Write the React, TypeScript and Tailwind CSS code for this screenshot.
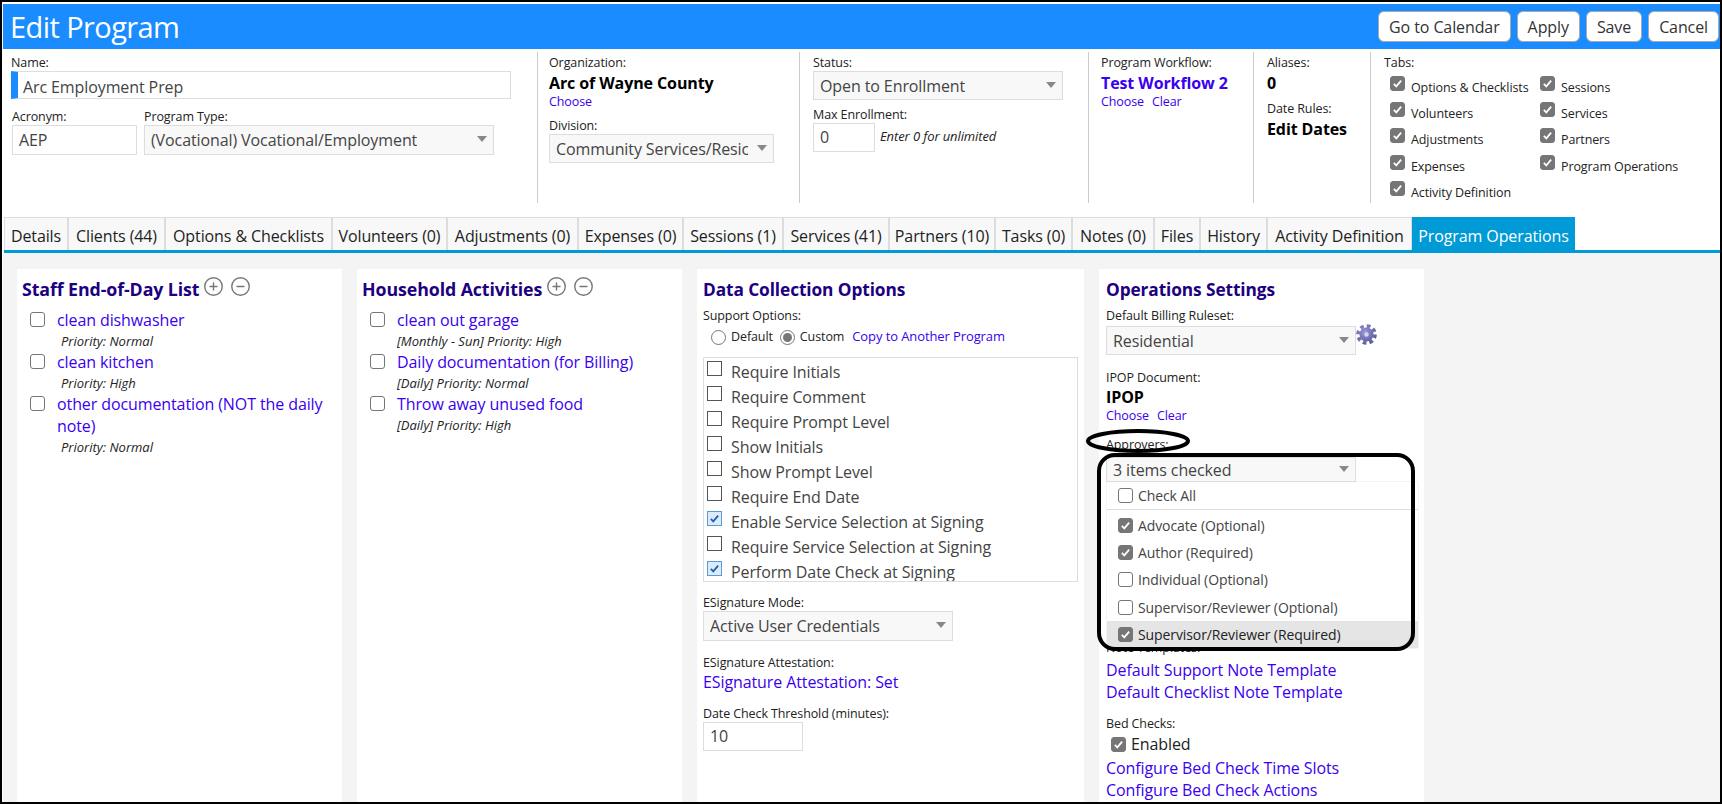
import { CircleMinus, CirclePlus } from "lucide-react"

const tabs = [
  { label: "Details", width: "w-[64px]" },
  { label: "Clients (44)", width: "w-[97px]" },
  { label: "Options & Checklists", width: "w-[167px]" },
  { label: "Volunteers (0)", width: "w-[115px]" },
  { label: "Adjustments (0)", width: "w-[131px]" },
  { label: "Expenses (0)", width: "w-[105px]" },
  { label: "Sessions (1)", width: "w-[100px]" },
  { label: "Services (41)", width: "w-[106px]" },
  { label: "Partners (10)", width: "w-[106px]" },
  { label: "Tasks (0)", width: "w-[77px]" },
  { label: "Notes (0)", width: "w-[82px]" },
  { label: "Files", width: "w-[46px]" },
  { label: "History", width: "w-[67px]" },
  { label: "Activity Definition", width: "w-[145px]" },
]

const tabChecks = [
  ["Options & Checklists", "Sessions"],
  ["Volunteers", "Services"],
  ["Adjustments", "Partners"],
  ["Expenses", "Program Operations"],
  ["Activity Definition", ""],
]

const supportOptions = [
  { label: "Require Initials", on: false },
  { label: "Require Comment", on: false },
  { label: "Require Prompt Level", on: false },
  { label: "Show Initials", on: false },
  { label: "Show Prompt Level", on: false },
  { label: "Require End Date", on: false },
  { label: "Enable Service Selection at Signing", on: true },
  { label: "Require Service Selection at Signing", on: false },
  { label: "Perform Date Check at Signing", on: true },
]

const approvers = [
  { label: "Advocate (Optional)", on: true },
  { label: "Author (Required)", on: true },
  { label: "Individual (Optional)", on: false },
  { label: "Supervisor/Reviewer (Optional)", on: false },
  { label: "Supervisor/Reviewer (Required)", on: true },
]

function Tick({ color = "#fff" }: { color?: string }) {
  return (
    <svg viewBox="0 0 16 16" className="h-full w-full">
      <path d="M3.5 8.5l3 3 6-7" fill="none" stroke={color} strokeWidth="2.2" />
    </svg>
  )
}

function GreyCheck({ on = true }: { on?: boolean }) {
  return (
    <span
      className={`block h-[15px] w-[15px] shrink-0 rounded-[3px] border ${
        on ? "border-[#767676] bg-[#767676]" : "border-[#767676] bg-white"
      }`}
    >
      {on && <Tick />}
    </span>
  )
}

function SquareCheck({ on }: { on: boolean }) {
  return (
    <span
      className={`block h-[15px] w-[15px] shrink-0 border ${
        on ? "border-[#5b9bd5] bg-[#dcebfa]" : "border-[#555] bg-white"
      }`}
    >
      {on && <Tick color="#1f5fb4" />}
    </span>
  )
}

function Arrow() {
  return (
    <svg width="10" height="6" viewBox="0 0 10 6" className="-mt-[2px] shrink-0">
      <polygon points="0,0 10,0 5,6" fill="#888" />
    </svg>
  )
}

function Gear() {
  return (
    <svg width="21" height="21" viewBox="0 0 21 21" className="-mt-[2px] shrink-0">
      <defs>
        <radialGradient id="gearFill" cx="40%" cy="35%" r="75%">
          <stop offset="0%" stopColor="#9c9cd8" />
          <stop offset="100%" stopColor="#5a5a9f" />
        </radialGradient>
      </defs>
      <circle cx="10.5" cy="10.5" r="8.4" fill="none" stroke="url(#gearFill)" strokeWidth="3.8" strokeDasharray="3.6 3" />
      <circle cx="10.5" cy="10.5" r="7" fill="url(#gearFill)" />
      <circle cx="10.5" cy="10.5" r="2.2" fill="#d4d4ec" />
    </svg>
  )
}

function Label({ children, className = "" }: { children: React.ReactNode; className?: string }) {
  return <div className={`h-4 text-[12.5px] leading-4 text-[#222] ${className}`}>{children}</div>
}

function Select({ value, className = "" }: { value: string; className?: string }) {
  return (
    <div
      className={`flex items-center justify-between border border-[#ddd] bg-[#f8f8f8] pl-[6px] pr-[6px] text-[16px] text-[#444] ${className}`}
    >
      <span className="mr-[9px] min-w-0 overflow-hidden whitespace-nowrap">{value}</span>
      <Arrow />
    </div>
  )
}

function LinkText({ children, className = "" }: { children: React.ReactNode; className?: string }) {
  return <a className={`text-[#3a00f0] ${className}`}>{children}</a>
}

function SmallLinks({ clear = true }: { clear?: boolean }) {
  return (
    <div className="flex h-4 gap-[8px] text-[12.5px] leading-4 text-[#3a00f0]">
      <a>Choose</a>
      {clear && <a>Clear</a>}
    </div>
  )
}

function Bold({ children, className = "" }: { children: React.ReactNode; className?: string }) {
  return <div className={`h-[22px] text-[16px] font-bold leading-[22px] text-black ${className}`}>{children}</div>
}

function Heading({ children, className = "text-[17.3px]" }: { children: React.ReactNode; className?: string }) {
  return <h2 className={`h-[22px] font-bold leading-[21px] text-[#200080] ${className}`}>{children}</h2>
}

function ListPanel({
  title,
  items,
  subIndent,
}: {
  title: string
  items: { text: string; sub: string }[]
  subIndent: string
}) {
  return (
    <section className="h-full w-[325px] shrink-0 bg-white pl-[5px] pr-[10px] pt-[10px]">
      <div className="flex items-start gap-[4px]">
        <Heading className="text-[17.8px]">{title}</Heading>
        <div className="-mt-[3px] flex gap-[6px] text-[#777]">
          <CirclePlus size={21} strokeWidth={1.6} />
          <CircleMinus size={21} strokeWidth={1.6} />
        </div>
      </div>
      <ul className="mt-2">
        {items.map((item) => (
          <li key={item.text} className="flex gap-[12px] pl-[8px]">
            <span className="pt-[3px]">
              <GreyCheck on={false} />
            </span>
            <div>
              <LinkText className="block text-[16px] leading-[22px]">{item.text}</LinkText>
              <div className={`h-5 text-[13px] italic leading-5 tracking-normal text-[#222] ${subIndent}`}>{item.sub}</div>
            </div>
          </li>
        ))}
      </ul>
    </section>
  )
}

export default function App() {
  return (
    <div className="relative h-[804px] w-[1722px] overflow-hidden border-2 border-black bg-white pl-px pt-[2px] font-['Open_Sans',sans-serif] tracking-[-0.1px]">
      <div className="flex h-full flex-col">
        <header className="flex h-[45px] shrink-0 items-center justify-between bg-[#1a8cff] pl-[7px] pr-px">
          <h1 className="text-[29px] font-normal tracking-[-0.02em] text-white">Edit Program</h1>
          <div className="flex gap-[6px]">
            {["Go to Calendar", "Apply", "Save", "Cancel"].map((b) => (
              <button
                key={b}
                className="h-[31px] rounded-[6px] border border-[#aaa] bg-white px-[10px] text-[16px] text-[#333]"
              >
                {b}
              </button>
            ))}
          </div>
        </header>

        {/* Program summary columns */}
        <div className="h-[168px] shrink-0 pt-[3px]">
          <div className="flex h-[151px]">
            <div className="w-[535px] shrink-0 border-r border-[#ccc] pl-2 pt-[3px]">
              <Label>Name:</Label>
              <div className="flex h-[28px] w-[500px] border border-[#ddd] border-l-[7px] border-l-[#1a8cff] pl-[5px] text-[16px] leading-[30px] text-[#444]">
                Arc Employment Prep
              </div>
              <div className="mt-[10px] flex gap-[7px] pl-px">
                <div className="w-[125px]">
                  <Label>Acronym:</Label>
                  <div className="h-[30px] border border-[#ddd] pl-[6px] text-[16px] leading-[28px] text-[#444]">
                    AEP
                  </div>
                </div>
                <div>
                  <Label>Program Type:</Label>
                  <Select value="(Vocational) Vocational/Employment" className="h-[30px] w-[350px]" />
                </div>
              </div>
            </div>

            <div className="w-[262px] shrink-0 border-r border-[#ccc] pl-[11px] pt-[3px]">
              <Label>Organization:</Label>
              <Bold className="mt-[1px]">Arc of Wayne County</Bold>
              <SmallLinks clear={false} />
              <Label className="mt-[8px]">Division:</Label>
              <Select value="Community Services/Resic" className="h-[29px] w-[225px]" />
            </div>

            <div className="w-[289px] shrink-0 border-r border-[#ccc] pl-[13px] pt-[3px]">
              <Label>Status:</Label>
              <Select value="Open to Enrollment" className="h-[29px] w-[250px]" />
              <Label className="mt-[7px]">Max Enrollment:</Label>
              <div className="flex items-start gap-[5px]">
                <div className="h-[29px] w-[62px] border border-[#ddd] pl-[6px] text-[16px] leading-[27px] text-[#444]">
                  0
                </div>
                <span className="pt-[5px] text-[13px] italic leading-4 text-[#222]">Enter 0 for unlimited</span>
              </div>
            </div>

            <div className="w-[165px] shrink-0 border-r border-[#ccc] pl-[12px] pt-[3px]">
              <Label>Program Workflow:</Label>
              <Bold className="mt-[1px] !text-[#3a00f0]">Test Workflow 2</Bold>
              <SmallLinks />
            </div>

            <div className="w-[117px] shrink-0 border-r border-[#ccc] pl-[13px] pt-[3px]">
              <Label>Aliases:</Label>
              <Bold className="mt-[1px]">0</Bold>
              <Label className="mt-[7px]">Date Rules:</Label>
              <Bold className="mt-[1px]">Edit Dates</Bold>
            </div>

            <div className="pl-[13px] pt-[3px]">
              <Label>Tabs:</Label>
              <div className="mt-[5px] pl-[6px]">
                {tabChecks.map((row) => (
                  <div key={row[0]} className="flex h-[26.2px]">
                    {row.map((name) => (
                      <div key={name} className="flex w-[150px] gap-[6px]">
                        {name && (
                          <>
                            <GreyCheck />
                            <span className="pt-[4px] text-[12.5px] leading-4 text-[#222]">{name}</span>
                          </>
                        )}
                      </div>
                    ))}
                  </div>
                ))}
              </div>
            </div>
          </div>
        </div>

        {/* Tab strip */}
        <nav className="flex h-[33px] shrink-0 pl-px">
          {tabs.map((t) => (
            <div
              key={t.label}
              className={`${t.width} shrink-0 overflow-hidden border border-b-0 border-[#ddd] bg-[#f8f8f8] text-center text-[16px] leading-[36px] whitespace-nowrap text-[#222]`}
            >
              {t.label}
            </div>
          ))}
          <div className="w-[163px] shrink-0 overflow-hidden bg-[#009ad6] text-center text-[16px] leading-[38px] whitespace-nowrap text-white">
            Program Operations
          </div>
        </nav>
        <div className="ml-px h-[3px] shrink-0 bg-[#009ad6]" />

        <main className="flex min-h-0 flex-1 gap-[15px] overflow-hidden bg-[#f4f4f4] pl-[14px] pt-[16px]">
          <ListPanel
            title="Staff End-of-Day List"
            subIndent="pl-[4px]"
            items={[
              { text: "clean dishwasher", sub: "Priority: Normal" },
              { text: "clean kitchen", sub: "Priority: High" },
              { text: "other documentation (NOT the daily note)", sub: "Priority: Normal" },
            ]}
          />
          <ListPanel
            title="Household Activities"
            subIndent=""
            items={[
              { text: "clean out garage", sub: "[Monthly - Sun] Priority: High" },
              { text: "Daily documentation (for Billing)", sub: "[Daily] Priority: Normal" },
              { text: "Throw away unused food", sub: "[Daily] Priority: High" },
            ]}
          />

          <section className="h-full w-[387px] shrink-0 bg-white px-[6px] pt-[10px]">
            <Heading>Data Collection Options</Heading>
            <Label className="mt-[7px]">Support Options:</Label>
            <div className="mt-[3px] flex h-5 items-center pl-[8px] text-[12.5px] text-[#222]">
              <span className="h-[15px] w-[15px] rounded-full border border-[#767676] bg-white" />
              <span className="ml-[5px]">Default</span>
              <span className="ml-[7px] flex h-[15px] w-[15px] items-center justify-center rounded-full border border-[#767676]">
                <span className="h-[9px] w-[9px] rounded-full bg-[#767676]" />
              </span>
              <span className="ml-[5px]">Custom</span>
              <LinkText className="ml-[8px] text-[13px]">Copy to Another Program</LinkText>
            </div>
            <div className="mt-[10px] h-[225px] overflow-hidden border border-[#ddd]">
              {supportOptions.map((o) => (
                <div key={o.label} className="flex h-[25px] gap-[9px] pl-[3px] pt-[3px]">
                  <SquareCheck on={o.on} />
                  <span className="text-[16px] leading-[22px] text-[#444]">{o.label}</span>
                </div>
              ))}
            </div>
            <Label className="mt-[13px]">ESignature Mode:</Label>
            <Select value="Active User Credentials" className="h-[30px] w-[250px]" />
            <Label className="mt-[14px]">ESignature Attestation:</Label>
            <LinkText className="block h-[22px] text-[16px] leading-[22px]">ESignature Attestation: Set</LinkText>
            <Label className="mt-[13px]">Date Check Threshold (minutes):</Label>
            <div className="h-[29px] w-[100px] border border-[#ddd] pl-[6px] text-[16px] leading-[27px] text-[#444]">
              10
            </div>
          </section>

          <section className="relative h-full w-[325px] shrink-0 bg-white px-[7px] pt-[10px]">
            <Heading>Operations Settings</Heading>
            <Label className="mt-[7px]">Default Billing Ruleset:</Label>
            <div className="mt-[2px] flex items-start">
              <Select value="Residential" className="h-[29px] w-[250px]" />
              <Gear />
            </div>
            <Label className="mt-[15px]">IPOP Document:</Label>
            <Bold>IPOP</Bold>
            <SmallLinks />
            <Label className="mt-[13px]">Approvers:</Label>
            <Select value="3 items checked" className="relative z-20 mt-[4px] h-[25px] w-[250px]" />

            {/* Open multi-select menu */}
            <div className="absolute left-[8px] top-[213px] z-10 h-[166px] w-[311px] overflow-hidden bg-white text-[14px] text-[#444] shadow-[0_0_1px_#bbb]">
              <div className="flex h-[28px] items-center gap-[5px] border-b border-[#ddd] pl-[11px]">
                <GreyCheck on={false} />
                <span>Check All</span>
              </div>
              <div className="pt-[2px]">
                {approvers.map((a, i) => (
                  <div
                    key={a.label}
                    className={`flex h-[27.2px] items-center gap-[5px] pl-[11px] ${i === 4 ? "bg-[#e5e5e5] text-[#222]" : ""}`}
                  >
                    <GreyCheck on={a.on} />
                    <span>{a.label}</span>
                  </div>
                ))}
              </div>
            </div>

            <Label className="mt-[158px]">Note Templates:</Label>
            <LinkText className="mt-[3px] block h-[22px] text-[16px] leading-[22px]">Default Support Note Template</LinkText>
            <LinkText className="block h-[22px] text-[16px] leading-[22px]">Default Checklist Note Template</LinkText>
            <Label className="mt-[13px]">Bed Checks:</Label>
            <div className="mt-px flex h-[22px] items-center gap-[5px] pl-[5px] text-[16px] text-[#222]">
              <GreyCheck />
              Enabled
            </div>
            <LinkText className="mt-[2px] block h-[22px] text-[16px] leading-[22px]">Configure Bed Check Time Slots</LinkText>
            <LinkText className="block h-[22px] text-[16px] leading-[22px]">Configure Bed Check Actions</LinkText>
          </section>
        </main>
      </div>

      {/* Hand-drawn annotation on top of the screenshot */}
      <svg
        className="pointer-events-none absolute left-[-2px] top-[-2px] z-30 h-[804px] w-[1722px]"
        viewBox="0 0 1722 804"
        fill="none"
        stroke="#000"
        strokeWidth="4"
      >
        <ellipse cx="1138" cy="441" rx="50" ry="10" />
        <rect x="1099" y="455" width="314" height="194" rx="16" />
      </svg>
    </div>
  )
}
